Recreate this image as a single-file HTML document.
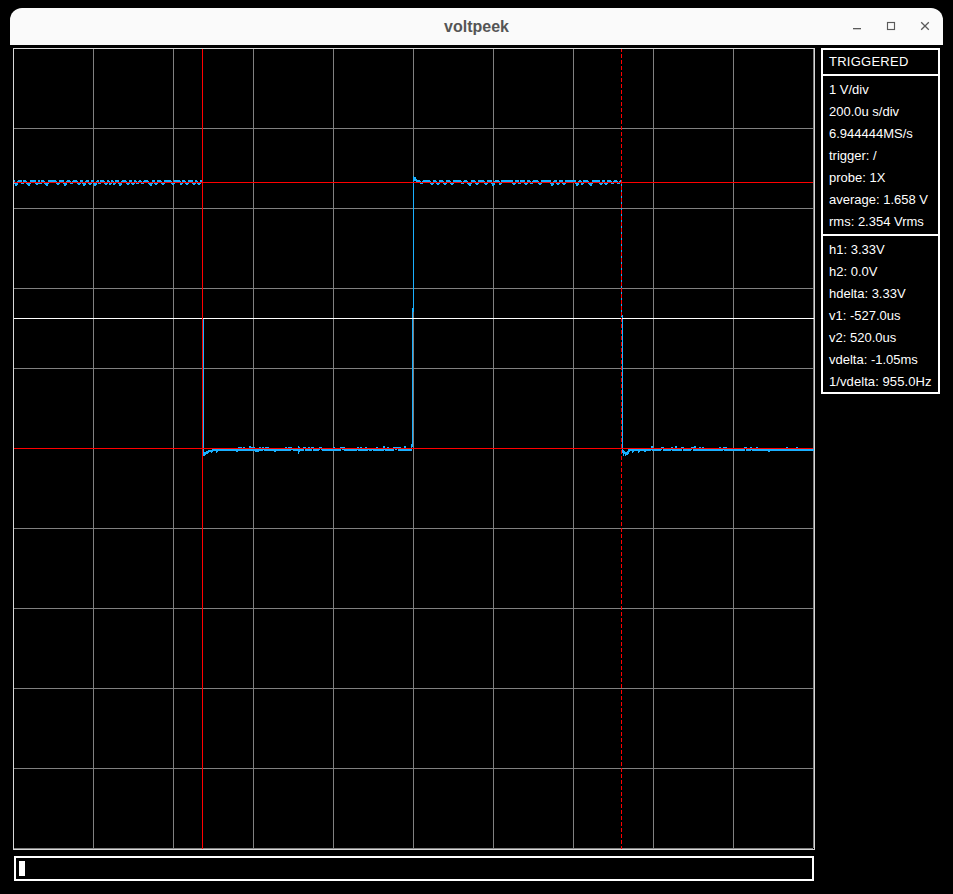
<!DOCTYPE html>
<html><head><meta charset="utf-8"><style>
html,body{margin:0;padding:0;background:#000;width:953px;height:894px;overflow:hidden;position:relative}
.title{position:absolute;left:10px;top:8px;width:933px;height:37px;background:#fafafa;border-radius:12px 12px 0 0}
.title .name{position:absolute;left:0;width:100%;top:9px;text-align:center;font-family:"Liberation Sans",sans-serif;font-weight:bold;font-size:16px;color:#555;line-height:20px}
.box{position:absolute;border:2px solid #fff;box-sizing:border-box}
.t{position:absolute;left:829px;font-family:"Liberation Sans",sans-serif;font-size:13px;line-height:15px;color:#fff;white-space:nowrap}
</style></head><body>
<div class="title"><div class="name">voltpeek</div>
<svg width="933" height="37" style="position:absolute;left:0;top:0">
<rect x="843" y="20" width="8" height="1.3" fill="#5a5a5a"/>
<rect x="877.5" y="14.5" width="7" height="7" fill="none" stroke="#5a5a5a" stroke-width="1.15"/>
<path d="M911.2 14.2 L918.8 21.8 M918.8 14.2 L911.2 21.8" stroke="#5a5a5a" stroke-width="1.3"/>
</svg></div>
<svg width="953" height="894" style="position:absolute;left:0;top:0" shape-rendering="crispEdges"><rect x="13" y="48" width="1" height="800" fill="#808080"/><rect x="13" y="48" width="800" height="1" fill="#808080"/><rect x="93" y="48" width="1" height="800" fill="#808080"/><rect x="13" y="128" width="800" height="1" fill="#808080"/><rect x="173" y="48" width="1" height="800" fill="#808080"/><rect x="13" y="208" width="800" height="1" fill="#808080"/><rect x="253" y="48" width="1" height="800" fill="#808080"/><rect x="13" y="288" width="800" height="1" fill="#808080"/><rect x="333" y="48" width="1" height="800" fill="#808080"/><rect x="13" y="368" width="800" height="1" fill="#808080"/><rect x="413" y="48" width="1" height="800" fill="#808080"/><rect x="13" y="448" width="800" height="1" fill="#808080"/><rect x="493" y="48" width="1" height="800" fill="#808080"/><rect x="13" y="528" width="800" height="1" fill="#808080"/><rect x="573" y="48" width="1" height="800" fill="#808080"/><rect x="13" y="608" width="800" height="1" fill="#808080"/><rect x="653" y="48" width="1" height="800" fill="#808080"/><rect x="13" y="688" width="800" height="1" fill="#808080"/><rect x="733" y="48" width="1" height="800" fill="#808080"/><rect x="13" y="768" width="800" height="1" fill="#808080"/><rect x="813" y="48" width="1" height="800" fill="#808080"/><rect x="13" y="848" width="800" height="1" fill="#808080"/><rect x="13" y="48" width="802" height="1" fill="#d8d8d8"/><rect x="13" y="48" width="1" height="802" fill="#d8d8d8"/><rect x="814" y="48" width="1" height="802" fill="#d8d8d8"/><rect x="13" y="849" width="802" height="1" fill="#d8d8d8"/><g fill="#1ab0ff"><rect x="203" y="448" width="1" height="1"/><rect x="233" y="448" width="2" height="1"/><rect x="238" y="448" width="4" height="1"/><rect x="243" y="448" width="2" height="1"/><rect x="249" y="448" width="6" height="1"/><rect x="259" y="448" width="2" height="1"/><rect x="262" y="448" width="7" height="1"/><rect x="270" y="448" width="2" height="1"/><rect x="278" y="448" width="2" height="1"/><rect x="285" y="448" width="2" height="1"/><rect x="288" y="448" width="8" height="1"/><rect x="298" y="448" width="2" height="1"/><rect x="303" y="448" width="3" height="1"/><rect x="308" y="448" width="2" height="1"/><rect x="311" y="448" width="3" height="1"/><rect x="318" y="448" width="5" height="1"/><rect x="333" y="448" width="4" height="1"/><rect x="340" y="448" width="5" height="1"/><rect x="347" y="448" width="4" height="1"/><rect x="354" y="448" width="5" height="1"/><rect x="360" y="448" width="2" height="1"/><rect x="365" y="448" width="5" height="1"/><rect x="371" y="448" width="3" height="1"/><rect x="376" y="448" width="2" height="1"/><rect x="381" y="448" width="5" height="1"/><rect x="387" y="448" width="2" height="1"/><rect x="393" y="448" width="8" height="1"/><rect x="404" y="448" width="2" height="1"/><rect x="409" y="448" width="3" height="1"/><rect x="622" y="448" width="1" height="1"/><rect x="642" y="448" width="2" height="1"/><rect x="645" y="448" width="4" height="1"/><rect x="650" y="448" width="3" height="1"/><rect x="660" y="448" width="4" height="1"/><rect x="670" y="448" width="3" height="1"/><rect x="675" y="448" width="2" height="1"/><rect x="681" y="448" width="3" height="1"/><rect x="688" y="448" width="8" height="1"/><rect x="699" y="448" width="2" height="1"/><rect x="702" y="448" width="2" height="1"/><rect x="707" y="448" width="2" height="1"/><rect x="711" y="448" width="2" height="1"/><rect x="719" y="448" width="2" height="1"/><rect x="722" y="448" width="5" height="1"/><rect x="734" y="448" width="2" height="1"/><rect x="737" y="448" width="6" height="1"/><rect x="744" y="448" width="5" height="1"/><rect x="750" y="448" width="3" height="1"/><rect x="756" y="448" width="2" height="1"/><rect x="765" y="448" width="4" height="1"/><rect x="779" y="448" width="2" height="1"/><rect x="786" y="448" width="2" height="1"/><rect x="796" y="448" width="2" height="1"/><rect x="203" y="322" width="1" height="1"/><rect x="412" y="322" width="1" height="1"/><rect x="622" y="322" width="1" height="1"/><rect x="203" y="328" width="1" height="1"/><rect x="412" y="328" width="1" height="1"/><rect x="622" y="328" width="1" height="1"/><rect x="203" y="449" width="1" height="1"/><rect x="212" y="449" width="92" height="1"/><rect x="305" y="449" width="7" height="1"/><rect x="313" y="449" width="7" height="1"/><rect x="321" y="449" width="20" height="1"/><rect x="342" y="449" width="52" height="1"/><rect x="395" y="449" width="2" height="1"/><rect x="398" y="449" width="14" height="1"/><rect x="622" y="449" width="1" height="1"/><rect x="628" y="449" width="34" height="1"/><rect x="663" y="449" width="19" height="1"/><rect x="683" y="449" width="9" height="1"/><rect x="693" y="449" width="52" height="1"/><rect x="746" y="449" width="68" height="1"/><rect x="203" y="450" width="1" height="1"/><rect x="208" y="450" width="55" height="1"/><rect x="264" y="450" width="27" height="1"/><rect x="293" y="450" width="11" height="1"/><rect x="305" y="450" width="7" height="1"/><rect x="313" y="450" width="6" height="1"/><rect x="322" y="450" width="19" height="1"/><rect x="344" y="450" width="13" height="1"/><rect x="358" y="450" width="10" height="1"/><rect x="369" y="450" width="3" height="1"/><rect x="373" y="450" width="11" height="1"/><rect x="385" y="450" width="9" height="1"/><rect x="398" y="450" width="14" height="1"/><rect x="622" y="450" width="2" height="1"/><rect x="628" y="450" width="23" height="1"/><rect x="652" y="450" width="9" height="1"/><rect x="663" y="450" width="8" height="1"/><rect x="672" y="450" width="10" height="1"/><rect x="683" y="450" width="8" height="1"/><rect x="693" y="450" width="30" height="1"/><rect x="724" y="450" width="21" height="1"/><rect x="746" y="450" width="5" height="1"/><rect x="752" y="450" width="62" height="1"/><rect x="203" y="433" width="1" height="1"/><rect x="412" y="433" width="1" height="1"/><rect x="622" y="433" width="1" height="1"/><rect x="203" y="447" width="1" height="1"/><rect x="238" y="447" width="4" height="1"/><rect x="243" y="447" width="2" height="1"/><rect x="249" y="447" width="6" height="1"/><rect x="259" y="447" width="2" height="1"/><rect x="262" y="447" width="2" height="1"/><rect x="265" y="447" width="4" height="1"/><rect x="285" y="447" width="2" height="1"/><rect x="288" y="447" width="4" height="1"/><rect x="298" y="447" width="2" height="1"/><rect x="303" y="447" width="3" height="1"/><rect x="308" y="447" width="2" height="1"/><rect x="311" y="447" width="3" height="1"/><rect x="319" y="447" width="3" height="1"/><rect x="333" y="447" width="2" height="1"/><rect x="340" y="447" width="5" height="1"/><rect x="357" y="447" width="2" height="1"/><rect x="360" y="447" width="2" height="1"/><rect x="365" y="447" width="2" height="1"/><rect x="376" y="447" width="2" height="1"/><rect x="383" y="447" width="2" height="1"/><rect x="387" y="447" width="2" height="1"/><rect x="393" y="447" width="8" height="1"/><rect x="404" y="447" width="2" height="1"/><rect x="411" y="447" width="1" height="1"/><rect x="622" y="447" width="1" height="1"/><rect x="651" y="447" width="2" height="1"/><rect x="661" y="447" width="3" height="1"/><rect x="671" y="447" width="2" height="1"/><rect x="675" y="447" width="2" height="1"/><rect x="681" y="447" width="3" height="1"/><rect x="691" y="447" width="5" height="1"/><rect x="699" y="447" width="2" height="1"/><rect x="702" y="447" width="2" height="1"/><rect x="719" y="447" width="2" height="1"/><rect x="723" y="447" width="4" height="1"/><rect x="744" y="447" width="3" height="1"/><rect x="750" y="447" width="2" height="1"/><rect x="756" y="447" width="2" height="1"/><rect x="786" y="447" width="2" height="1"/><rect x="796" y="447" width="2" height="1"/><rect x="203" y="443" width="1" height="1"/><rect x="412" y="443" width="1" height="1"/><rect x="622" y="443" width="1" height="1"/><rect x="202" y="208" width="1" height="1"/><rect x="413" y="208" width="1" height="1"/><rect x="621" y="208" width="1" height="1"/><rect x="202" y="224" width="1" height="1"/><rect x="413" y="224" width="1" height="1"/><rect x="621" y="224" width="1" height="1"/><rect x="203" y="341" width="1" height="1"/><rect x="412" y="341" width="1" height="1"/><rect x="622" y="341" width="1" height="1"/><rect x="203" y="335" width="1" height="1"/><rect x="412" y="335" width="1" height="1"/><rect x="622" y="335" width="1" height="1"/><rect x="14" y="180" width="1" height="1"/><rect x="18" y="180" width="4" height="1"/><rect x="23" y="180" width="3" height="1"/><rect x="30" y="180" width="6" height="1"/><rect x="38" y="180" width="2" height="1"/><rect x="41" y="180" width="3" height="1"/><rect x="48" y="180" width="8" height="1"/><rect x="59" y="180" width="5" height="1"/><rect x="67" y="180" width="3" height="1"/><rect x="73" y="180" width="4" height="1"/><rect x="80" y="180" width="3" height="1"/><rect x="86" y="180" width="3" height="1"/><rect x="91" y="180" width="3" height="1"/><rect x="97" y="180" width="2" height="1"/><rect x="100" y="180" width="4" height="1"/><rect x="107" y="180" width="2" height="1"/><rect x="111" y="180" width="2" height="1"/><rect x="115" y="180" width="4" height="1"/><rect x="122" y="180" width="4" height="1"/><rect x="129" y="180" width="3" height="1"/><rect x="134" y="180" width="2" height="1"/><rect x="139" y="180" width="2" height="1"/><rect x="144" y="180" width="4" height="1"/><rect x="152" y="180" width="3" height="1"/><rect x="157" y="180" width="4" height="1"/><rect x="164" y="180" width="7" height="1"/><rect x="174" y="180" width="6" height="1"/><rect x="182" y="180" width="3" height="1"/><rect x="188" y="180" width="5" height="1"/><rect x="195" y="180" width="2" height="1"/><rect x="200" y="180" width="2" height="1"/><rect x="413" y="180" width="7" height="1"/><rect x="423" y="180" width="7" height="1"/><rect x="433" y="180" width="3" height="1"/><rect x="439" y="180" width="4" height="1"/><rect x="446" y="180" width="4" height="1"/><rect x="453" y="180" width="8" height="1"/><rect x="464" y="180" width="3" height="1"/><rect x="471" y="180" width="4" height="1"/><rect x="478" y="180" width="6" height="1"/><rect x="487" y="180" width="5" height="1"/><rect x="495" y="180" width="4" height="1"/><rect x="501" y="180" width="12" height="1"/><rect x="515" y="180" width="4" height="1"/><rect x="520" y="180" width="5" height="1"/><rect x="527" y="180" width="3" height="1"/><rect x="533" y="180" width="5" height="1"/><rect x="541" y="180" width="10" height="1"/><rect x="554" y="180" width="3" height="1"/><rect x="559" y="180" width="4" height="1"/><rect x="565" y="180" width="11" height="1"/><rect x="579" y="180" width="2" height="1"/><rect x="583" y="180" width="5" height="1"/><rect x="592" y="180" width="8" height="1"/><rect x="602" y="180" width="3" height="1"/><rect x="607" y="180" width="4" height="1"/><rect x="614" y="180" width="3" height="1"/><rect x="620" y="180" width="1" height="1"/><rect x="203" y="453" width="5" height="1"/><rect x="298" y="453" width="1" height="1"/><rect x="623" y="453" width="6" height="1"/><rect x="14" y="182" width="2" height="1"/><rect x="17" y="182" width="2" height="1"/><rect x="21" y="182" width="3" height="1"/><rect x="25" y="182" width="3" height="1"/><rect x="29" y="182" width="2" height="1"/><rect x="35" y="182" width="7" height="1"/><rect x="43" y="182" width="3" height="1"/><rect x="47" y="182" width="2" height="1"/><rect x="55" y="182" width="5" height="1"/><rect x="63" y="182" width="2" height="1"/><rect x="66" y="182" width="2" height="1"/><rect x="69" y="182" width="5" height="1"/><rect x="76" y="182" width="5" height="1"/><rect x="82" y="182" width="2" height="1"/><rect x="85" y="182" width="2" height="1"/><rect x="88" y="182" width="4" height="1"/><rect x="93" y="182" width="2" height="1"/><rect x="96" y="182" width="5" height="1"/><rect x="103" y="182" width="13" height="1"/><rect x="118" y="182" width="2" height="1"/><rect x="121" y="182" width="2" height="1"/><rect x="125" y="182" width="5" height="1"/><rect x="131" y="182" width="14" height="1"/><rect x="147" y="182" width="3" height="1"/><rect x="151" y="182" width="2" height="1"/><rect x="154" y="182" width="4" height="1"/><rect x="160" y="182" width="5" height="1"/><rect x="170" y="182" width="5" height="1"/><rect x="179" y="182" width="4" height="1"/><rect x="184" y="182" width="5" height="1"/><rect x="192" y="182" width="9" height="1"/><rect x="202" y="182" width="1" height="1"/><rect x="413" y="182" width="1" height="1"/><rect x="419" y="182" width="5" height="1"/><rect x="429" y="182" width="5" height="1"/><rect x="435" y="182" width="5" height="1"/><rect x="442" y="182" width="5" height="1"/><rect x="449" y="182" width="5" height="1"/><rect x="460" y="182" width="5" height="1"/><rect x="466" y="182" width="3" height="1"/><rect x="470" y="182" width="2" height="1"/><rect x="474" y="182" width="5" height="1"/><rect x="483" y="182" width="5" height="1"/><rect x="491" y="182" width="2" height="1"/><rect x="494" y="182" width="2" height="1"/><rect x="498" y="182" width="4" height="1"/><rect x="512" y="182" width="4" height="1"/><rect x="518" y="182" width="3" height="1"/><rect x="524" y="182" width="4" height="1"/><rect x="529" y="182" width="5" height="1"/><rect x="537" y="182" width="5" height="1"/><rect x="550" y="182" width="2" height="1"/><rect x="553" y="182" width="2" height="1"/><rect x="556" y="182" width="4" height="1"/><rect x="562" y="182" width="4" height="1"/><rect x="575" y="182" width="2" height="1"/><rect x="578" y="182" width="6" height="1"/><rect x="587" y="182" width="3" height="1"/><rect x="591" y="182" width="2" height="1"/><rect x="599" y="182" width="4" height="1"/><rect x="604" y="182" width="4" height="1"/><rect x="610" y="182" width="5" height="1"/><rect x="616" y="182" width="6" height="1"/><rect x="203" y="451" width="1" height="1"/><rect x="206" y="451" width="7" height="1"/><rect x="216" y="451" width="2" height="1"/><rect x="236" y="451" width="2" height="1"/><rect x="255" y="451" width="4" height="1"/><rect x="274" y="451" width="2" height="1"/><rect x="298" y="451" width="2" height="1"/><rect x="622" y="451" width="3" height="1"/><rect x="627" y="451" width="3" height="1"/><rect x="632" y="451" width="2" height="1"/><rect x="638" y="451" width="2" height="1"/><rect x="644" y="451" width="2" height="1"/><rect x="768" y="451" width="2" height="1"/><rect x="202" y="237" width="1" height="1"/><rect x="413" y="237" width="1" height="1"/><rect x="621" y="237" width="1" height="1"/><rect x="202" y="277" width="1" height="1"/><rect x="413" y="277" width="1" height="1"/><rect x="621" y="277" width="1" height="1"/><rect x="203" y="387" width="1" height="1"/><rect x="412" y="387" width="1" height="1"/><rect x="622" y="387" width="1" height="1"/><rect x="14" y="181" width="1" height="1"/><rect x="17" y="181" width="5" height="1"/><rect x="23" y="181" width="4" height="1"/><rect x="30" y="181" width="6" height="1"/><rect x="38" y="181" width="2" height="1"/><rect x="41" y="181" width="4" height="1"/><rect x="48" y="181" width="9" height="1"/><rect x="59" y="181" width="5" height="1"/><rect x="66" y="181" width="5" height="1"/><rect x="72" y="181" width="6" height="1"/><rect x="80" y="181" width="3" height="1"/><rect x="85" y="181" width="4" height="1"/><rect x="91" y="181" width="3" height="1"/><rect x="96" y="181" width="3" height="1"/><rect x="100" y="181" width="5" height="1"/><rect x="107" y="181" width="3" height="1"/><rect x="111" y="181" width="3" height="1"/><rect x="115" y="181" width="4" height="1"/><rect x="121" y="181" width="6" height="1"/><rect x="129" y="181" width="3" height="1"/><rect x="134" y="181" width="3" height="1"/><rect x="138" y="181" width="4" height="1"/><rect x="143" y="181" width="6" height="1"/><rect x="152" y="181" width="3" height="1"/><rect x="157" y="181" width="5" height="1"/><rect x="164" y="181" width="8" height="1"/><rect x="174" y="181" width="7" height="1"/><rect x="182" y="181" width="4" height="1"/><rect x="188" y="181" width="5" height="1"/><rect x="195" y="181" width="3" height="1"/><rect x="200" y="181" width="3" height="1"/><rect x="413" y="181" width="1" height="1"/><rect x="416" y="181" width="5" height="1"/><rect x="422" y="181" width="9" height="1"/><rect x="433" y="181" width="4" height="1"/><rect x="439" y="181" width="5" height="1"/><rect x="446" y="181" width="5" height="1"/><rect x="453" y="181" width="9" height="1"/><rect x="463" y="181" width="5" height="1"/><rect x="471" y="181" width="5" height="1"/><rect x="478" y="181" width="7" height="1"/><rect x="487" y="181" width="5" height="1"/><rect x="494" y="181" width="6" height="1"/><rect x="501" y="181" width="12" height="1"/><rect x="515" y="181" width="4" height="1"/><rect x="520" y="181" width="5" height="1"/><rect x="527" y="181" width="4" height="1"/><rect x="532" y="181" width="7" height="1"/><rect x="541" y="181" width="10" height="1"/><rect x="553" y="181" width="4" height="1"/><rect x="559" y="181" width="4" height="1"/><rect x="565" y="181" width="11" height="1"/><rect x="578" y="181" width="4" height="1"/><rect x="583" y="181" width="6" height="1"/><rect x="592" y="181" width="8" height="1"/><rect x="602" y="181" width="3" height="1"/><rect x="607" y="181" width="5" height="1"/><rect x="613" y="181" width="5" height="1"/><rect x="619" y="181" width="3" height="1"/><rect x="14" y="183" width="4" height="1"/><rect x="21" y="183" width="3" height="1"/><rect x="26" y="183" width="5" height="1"/><rect x="35" y="183" width="7" height="1"/><rect x="44" y="183" width="5" height="1"/><rect x="56" y="183" width="4" height="1"/><rect x="63" y="183" width="4" height="1"/><rect x="70" y="183" width="3" height="1"/><rect x="77" y="183" width="4" height="1"/><rect x="82" y="183" width="4" height="1"/><rect x="88" y="183" width="4" height="1"/><rect x="93" y="183" width="4" height="1"/><rect x="98" y="183" width="3" height="1"/><rect x="104" y="183" width="4" height="1"/><rect x="109" y="183" width="3" height="1"/><rect x="113" y="183" width="3" height="1"/><rect x="118" y="183" width="4" height="1"/><rect x="126" y="183" width="4" height="1"/><rect x="131" y="183" width="4" height="1"/><rect x="136" y="183" width="3" height="1"/><rect x="141" y="183" width="3" height="1"/><rect x="148" y="183" width="5" height="1"/><rect x="154" y="183" width="4" height="1"/><rect x="161" y="183" width="4" height="1"/><rect x="171" y="183" width="4" height="1"/><rect x="180" y="183" width="3" height="1"/><rect x="185" y="183" width="4" height="1"/><rect x="192" y="183" width="4" height="1"/><rect x="197" y="183" width="4" height="1"/><rect x="202" y="183" width="1" height="1"/><rect x="413" y="183" width="1" height="1"/><rect x="420" y="183" width="3" height="1"/><rect x="430" y="183" width="4" height="1"/><rect x="436" y="183" width="4" height="1"/><rect x="443" y="183" width="4" height="1"/><rect x="450" y="183" width="4" height="1"/><rect x="461" y="183" width="3" height="1"/><rect x="467" y="183" width="5" height="1"/><rect x="475" y="183" width="4" height="1"/><rect x="484" y="183" width="4" height="1"/><rect x="491" y="183" width="4" height="1"/><rect x="499" y="183" width="3" height="1"/><rect x="512" y="183" width="4" height="1"/><rect x="518" y="183" width="3" height="1"/><rect x="524" y="183" width="4" height="1"/><rect x="530" y="183" width="3" height="1"/><rect x="538" y="183" width="4" height="1"/><rect x="550" y="183" width="4" height="1"/><rect x="556" y="183" width="4" height="1"/><rect x="562" y="183" width="4" height="1"/><rect x="575" y="183" width="4" height="1"/><rect x="581" y="183" width="3" height="1"/><rect x="588" y="183" width="5" height="1"/><rect x="599" y="183" width="4" height="1"/><rect x="604" y="183" width="4" height="1"/><rect x="611" y="183" width="3" height="1"/><rect x="617" y="183" width="3" height="1"/><rect x="621" y="183" width="1" height="1"/><rect x="15" y="185" width="2" height="1"/><rect x="28" y="185" width="2" height="1"/><rect x="46" y="185" width="2" height="1"/><rect x="64" y="185" width="2" height="1"/><rect x="83" y="185" width="2" height="1"/><rect x="94" y="185" width="2" height="1"/><rect x="119" y="185" width="2" height="1"/><rect x="150" y="185" width="2" height="1"/><rect x="202" y="185" width="1" height="1"/><rect x="413" y="185" width="1" height="1"/><rect x="469" y="185" width="2" height="1"/><rect x="492" y="185" width="2" height="1"/><rect x="551" y="185" width="2" height="1"/><rect x="576" y="185" width="2" height="1"/><rect x="590" y="185" width="2" height="1"/><rect x="621" y="185" width="1" height="1"/><rect x="202" y="290" width="1" height="1"/><rect x="413" y="290" width="1" height="1"/><rect x="621" y="290" width="1" height="1"/><rect x="15" y="184" width="3" height="1"/><rect x="27" y="184" width="3" height="1"/><rect x="36" y="184" width="2" height="1"/><rect x="45" y="184" width="3" height="1"/><rect x="57" y="184" width="2" height="1"/><rect x="64" y="184" width="3" height="1"/><rect x="78" y="184" width="2" height="1"/><rect x="83" y="184" width="3" height="1"/><rect x="89" y="184" width="2" height="1"/><rect x="94" y="184" width="3" height="1"/><rect x="105" y="184" width="2" height="1"/><rect x="109" y="184" width="2" height="1"/><rect x="113" y="184" width="2" height="1"/><rect x="119" y="184" width="3" height="1"/><rect x="127" y="184" width="2" height="1"/><rect x="132" y="184" width="2" height="1"/><rect x="149" y="184" width="3" height="1"/><rect x="155" y="184" width="2" height="1"/><rect x="162" y="184" width="2" height="1"/><rect x="172" y="184" width="2" height="1"/><rect x="180" y="184" width="2" height="1"/><rect x="186" y="184" width="2" height="1"/><rect x="193" y="184" width="2" height="1"/><rect x="198" y="184" width="2" height="1"/><rect x="202" y="184" width="1" height="1"/><rect x="413" y="184" width="1" height="1"/><rect x="431" y="184" width="2" height="1"/><rect x="437" y="184" width="2" height="1"/><rect x="444" y="184" width="2" height="1"/><rect x="451" y="184" width="2" height="1"/><rect x="468" y="184" width="3" height="1"/><rect x="476" y="184" width="2" height="1"/><rect x="485" y="184" width="2" height="1"/><rect x="492" y="184" width="3" height="1"/><rect x="499" y="184" width="2" height="1"/><rect x="513" y="184" width="2" height="1"/><rect x="525" y="184" width="2" height="1"/><rect x="539" y="184" width="2" height="1"/><rect x="551" y="184" width="3" height="1"/><rect x="557" y="184" width="2" height="1"/><rect x="563" y="184" width="2" height="1"/><rect x="576" y="184" width="3" height="1"/><rect x="581" y="184" width="2" height="1"/><rect x="589" y="184" width="3" height="1"/><rect x="600" y="184" width="2" height="1"/><rect x="605" y="184" width="2" height="1"/><rect x="621" y="184" width="1" height="1"/><rect x="203" y="400" width="1" height="1"/><rect x="412" y="400" width="1" height="1"/><rect x="622" y="400" width="1" height="1"/><rect x="203" y="410" width="1" height="1"/><rect x="412" y="410" width="1" height="1"/><rect x="622" y="410" width="1" height="1"/><rect x="203" y="416" width="1" height="1"/><rect x="412" y="416" width="1" height="1"/><rect x="622" y="416" width="1" height="1"/><rect x="202" y="191" width="1" height="1"/><rect x="413" y="191" width="1" height="1"/><rect x="621" y="191" width="1" height="1"/><rect x="202" y="296" width="1" height="1"/><rect x="413" y="296" width="1" height="1"/><rect x="621" y="296" width="1" height="1"/><rect x="202" y="312" width="1" height="1"/><rect x="412" y="312" width="1" height="1"/><rect x="621" y="312" width="1" height="1"/><rect x="203" y="423" width="1" height="1"/><rect x="412" y="423" width="1" height="1"/><rect x="622" y="423" width="1" height="1"/><rect x="203" y="429" width="1" height="1"/><rect x="412" y="429" width="1" height="1"/><rect x="622" y="429" width="1" height="1"/><rect x="202" y="204" width="1" height="1"/><rect x="413" y="204" width="1" height="1"/><rect x="621" y="204" width="1" height="1"/><rect x="202" y="244" width="1" height="1"/><rect x="413" y="244" width="1" height="1"/><rect x="621" y="244" width="1" height="1"/><rect x="203" y="354" width="1" height="1"/><rect x="412" y="354" width="1" height="1"/><rect x="622" y="354" width="1" height="1"/><rect x="202" y="309" width="1" height="1"/><rect x="412" y="309" width="2" height="1"/><rect x="621" y="309" width="1" height="1"/><rect x="202" y="257" width="1" height="1"/><rect x="413" y="257" width="1" height="1"/><rect x="621" y="257" width="1" height="1"/><rect x="203" y="452" width="6" height="1"/><rect x="211" y="452" width="1" height="1"/><rect x="216" y="452" width="1" height="1"/><rect x="298" y="452" width="1" height="1"/><rect x="622" y="452" width="7" height="1"/><rect x="632" y="452" width="1" height="1"/><rect x="638" y="452" width="1" height="1"/><rect x="203" y="367" width="1" height="1"/><rect x="412" y="367" width="1" height="1"/><rect x="622" y="367" width="1" height="1"/><rect x="203" y="377" width="1" height="1"/><rect x="412" y="377" width="1" height="1"/><rect x="622" y="377" width="1" height="1"/><rect x="203" y="383" width="1" height="1"/><rect x="412" y="383" width="1" height="1"/><rect x="622" y="383" width="1" height="1"/><rect x="202" y="263" width="1" height="1"/><rect x="413" y="263" width="1" height="1"/><rect x="621" y="263" width="1" height="1"/><rect x="203" y="390" width="1" height="1"/><rect x="412" y="390" width="1" height="1"/><rect x="622" y="390" width="1" height="1"/><rect x="203" y="396" width="1" height="1"/><rect x="412" y="396" width="1" height="1"/><rect x="622" y="396" width="1" height="1"/><rect x="202" y="211" width="1" height="1"/><rect x="413" y="211" width="1" height="1"/><rect x="621" y="211" width="1" height="1"/><rect x="203" y="321" width="1" height="1"/><rect x="412" y="321" width="1" height="1"/><rect x="622" y="321" width="1" height="1"/><rect x="202" y="276" width="1" height="1"/><rect x="413" y="276" width="1" height="1"/><rect x="621" y="276" width="1" height="1"/><rect x="202" y="292" width="1" height="1"/><rect x="413" y="292" width="1" height="1"/><rect x="621" y="292" width="1" height="1"/><rect x="203" y="334" width="1" height="1"/><rect x="412" y="334" width="1" height="1"/><rect x="622" y="334" width="1" height="1"/><rect x="203" y="350" width="1" height="1"/><rect x="412" y="350" width="1" height="1"/><rect x="622" y="350" width="1" height="1"/><rect x="202" y="305" width="1" height="1"/><rect x="413" y="305" width="1" height="1"/><rect x="621" y="305" width="1" height="1"/><rect x="202" y="230" width="1" height="1"/><rect x="413" y="230" width="1" height="1"/><rect x="621" y="230" width="1" height="1"/><rect x="203" y="357" width="1" height="1"/><rect x="412" y="357" width="1" height="1"/><rect x="622" y="357" width="1" height="1"/><rect x="203" y="363" width="1" height="1"/><rect x="412" y="363" width="1" height="1"/><rect x="622" y="363" width="1" height="1"/><rect x="202" y="243" width="1" height="1"/><rect x="413" y="243" width="1" height="1"/><rect x="621" y="243" width="1" height="1"/><rect x="202" y="259" width="1" height="1"/><rect x="413" y="259" width="1" height="1"/><rect x="621" y="259" width="1" height="1"/><rect x="203" y="370" width="1" height="1"/><rect x="412" y="370" width="1" height="1"/><rect x="622" y="370" width="1" height="1"/><rect x="202" y="272" width="1" height="1"/><rect x="413" y="272" width="1" height="1"/><rect x="621" y="272" width="1" height="1"/><rect x="203" y="422" width="1" height="1"/><rect x="412" y="422" width="1" height="1"/><rect x="622" y="422" width="1" height="1"/><rect x="203" y="438" width="1" height="1"/><rect x="412" y="438" width="1" height="1"/><rect x="622" y="438" width="1" height="1"/><rect x="202" y="197" width="1" height="1"/><rect x="413" y="197" width="1" height="1"/><rect x="621" y="197" width="1" height="1"/><rect x="203" y="446" width="1" height="1"/><rect x="249" y="446" width="2" height="1"/><rect x="298" y="446" width="1" height="1"/><rect x="383" y="446" width="2" height="1"/><rect x="404" y="446" width="2" height="1"/><rect x="411" y="446" width="2" height="1"/><rect x="622" y="446" width="1" height="1"/><rect x="651" y="446" width="2" height="1"/><rect x="675" y="446" width="2" height="1"/><rect x="694" y="446" width="2" height="1"/><rect x="203" y="324" width="1" height="1"/><rect x="412" y="324" width="1" height="1"/><rect x="622" y="324" width="1" height="1"/><rect x="203" y="330" width="1" height="1"/><rect x="412" y="330" width="1" height="1"/><rect x="622" y="330" width="1" height="1"/><rect x="203" y="435" width="1" height="1"/><rect x="412" y="435" width="1" height="1"/><rect x="622" y="435" width="1" height="1"/><rect x="203" y="445" width="1" height="1"/><rect x="411" y="445" width="2" height="1"/><rect x="622" y="445" width="1" height="1"/><rect x="202" y="210" width="1" height="1"/><rect x="413" y="210" width="1" height="1"/><rect x="621" y="210" width="1" height="1"/><rect x="202" y="226" width="1" height="1"/><rect x="413" y="226" width="1" height="1"/><rect x="621" y="226" width="1" height="1"/><rect x="203" y="337" width="1" height="1"/><rect x="412" y="337" width="1" height="1"/><rect x="622" y="337" width="1" height="1"/><rect x="202" y="239" width="1" height="1"/><rect x="413" y="239" width="1" height="1"/><rect x="621" y="239" width="1" height="1"/><rect x="202" y="279" width="1" height="1"/><rect x="413" y="279" width="1" height="1"/><rect x="621" y="279" width="1" height="1"/><rect x="203" y="389" width="1" height="1"/><rect x="412" y="389" width="1" height="1"/><rect x="622" y="389" width="1" height="1"/><rect x="202" y="285" width="1" height="1"/><rect x="413" y="285" width="1" height="1"/><rect x="621" y="285" width="1" height="1"/><rect x="203" y="402" width="1" height="1"/><rect x="412" y="402" width="1" height="1"/><rect x="622" y="402" width="1" height="1"/><rect x="203" y="412" width="1" height="1"/><rect x="412" y="412" width="1" height="1"/><rect x="622" y="412" width="1" height="1"/><rect x="203" y="418" width="1" height="1"/><rect x="412" y="418" width="1" height="1"/><rect x="622" y="418" width="1" height="1"/><rect x="202" y="193" width="1" height="1"/><rect x="413" y="193" width="1" height="1"/><rect x="621" y="193" width="1" height="1"/><rect x="202" y="298" width="1" height="1"/><rect x="413" y="298" width="1" height="1"/><rect x="621" y="298" width="1" height="1"/><rect x="202" y="314" width="1" height="1"/><rect x="412" y="314" width="1" height="1"/><rect x="621" y="314" width="1" height="1"/><rect x="203" y="425" width="1" height="1"/><rect x="412" y="425" width="1" height="1"/><rect x="622" y="425" width="1" height="1"/><rect x="203" y="431" width="1" height="1"/><rect x="412" y="431" width="1" height="1"/><rect x="622" y="431" width="1" height="1"/><rect x="202" y="206" width="1" height="1"/><rect x="413" y="206" width="1" height="1"/><rect x="621" y="206" width="1" height="1"/><rect x="202" y="246" width="1" height="1"/><rect x="413" y="246" width="1" height="1"/><rect x="621" y="246" width="1" height="1"/><rect x="203" y="356" width="1" height="1"/><rect x="412" y="356" width="1" height="1"/><rect x="622" y="356" width="1" height="1"/><rect x="202" y="252" width="1" height="1"/><rect x="413" y="252" width="1" height="1"/><rect x="621" y="252" width="1" height="1"/><rect x="203" y="369" width="1" height="1"/><rect x="412" y="369" width="1" height="1"/><rect x="622" y="369" width="1" height="1"/><rect x="203" y="379" width="1" height="1"/><rect x="412" y="379" width="1" height="1"/><rect x="622" y="379" width="1" height="1"/><rect x="203" y="385" width="1" height="1"/><rect x="412" y="385" width="1" height="1"/><rect x="622" y="385" width="1" height="1"/><rect x="202" y="265" width="1" height="1"/><rect x="413" y="265" width="1" height="1"/><rect x="621" y="265" width="1" height="1"/><rect x="203" y="454" width="3" height="1"/><rect x="623" y="454" width="1" height="1"/><rect x="625" y="454" width="3" height="1"/><rect x="202" y="281" width="1" height="1"/><rect x="413" y="281" width="1" height="1"/><rect x="621" y="281" width="1" height="1"/><rect x="203" y="392" width="1" height="1"/><rect x="412" y="392" width="1" height="1"/><rect x="622" y="392" width="1" height="1"/><rect x="203" y="398" width="1" height="1"/><rect x="412" y="398" width="1" height="1"/><rect x="622" y="398" width="1" height="1"/><rect x="202" y="213" width="1" height="1"/><rect x="413" y="213" width="1" height="1"/><rect x="621" y="213" width="1" height="1"/><rect x="203" y="323" width="1" height="1"/><rect x="412" y="323" width="1" height="1"/><rect x="622" y="323" width="1" height="1"/><rect x="202" y="294" width="1" height="1"/><rect x="413" y="294" width="1" height="1"/><rect x="621" y="294" width="1" height="1"/><rect x="203" y="444" width="1" height="1"/><rect x="411" y="444" width="2" height="1"/><rect x="622" y="444" width="1" height="1"/><rect x="203" y="336" width="1" height="1"/><rect x="412" y="336" width="1" height="1"/><rect x="622" y="336" width="1" height="1"/><rect x="203" y="346" width="1" height="1"/><rect x="412" y="346" width="1" height="1"/><rect x="622" y="346" width="1" height="1"/><rect x="203" y="352" width="1" height="1"/><rect x="412" y="352" width="1" height="1"/><rect x="622" y="352" width="1" height="1"/><rect x="202" y="232" width="1" height="1"/><rect x="413" y="232" width="1" height="1"/><rect x="621" y="232" width="1" height="1"/><rect x="202" y="248" width="1" height="1"/><rect x="413" y="248" width="1" height="1"/><rect x="621" y="248" width="1" height="1"/><rect x="203" y="359" width="1" height="1"/><rect x="412" y="359" width="1" height="1"/><rect x="622" y="359" width="1" height="1"/><rect x="203" y="365" width="1" height="1"/><rect x="412" y="365" width="1" height="1"/><rect x="622" y="365" width="1" height="1"/><rect x="202" y="245" width="1" height="1"/><rect x="413" y="245" width="1" height="1"/><rect x="621" y="245" width="1" height="1"/><rect x="202" y="261" width="1" height="1"/><rect x="413" y="261" width="1" height="1"/><rect x="621" y="261" width="1" height="1"/><rect x="202" y="301" width="1" height="1"/><rect x="413" y="301" width="1" height="1"/><rect x="621" y="301" width="1" height="1"/><rect x="203" y="411" width="1" height="1"/><rect x="412" y="411" width="1" height="1"/><rect x="622" y="411" width="1" height="1"/><rect x="202" y="313" width="1" height="1"/><rect x="412" y="313" width="1" height="1"/><rect x="621" y="313" width="1" height="1"/><rect x="203" y="319" width="1" height="1"/><rect x="412" y="319" width="1" height="1"/><rect x="622" y="319" width="1" height="1"/><rect x="203" y="424" width="1" height="1"/><rect x="412" y="424" width="1" height="1"/><rect x="622" y="424" width="1" height="1"/><rect x="203" y="440" width="1" height="1"/><rect x="412" y="440" width="1" height="1"/><rect x="622" y="440" width="1" height="1"/><rect x="202" y="199" width="1" height="1"/><rect x="413" y="199" width="1" height="1"/><rect x="621" y="199" width="1" height="1"/><rect x="203" y="326" width="1" height="1"/><rect x="412" y="326" width="1" height="1"/><rect x="622" y="326" width="1" height="1"/><rect x="203" y="332" width="1" height="1"/><rect x="412" y="332" width="1" height="1"/><rect x="622" y="332" width="1" height="1"/><rect x="202" y="212" width="1" height="1"/><rect x="413" y="212" width="1" height="1"/><rect x="621" y="212" width="1" height="1"/><rect x="202" y="228" width="1" height="1"/><rect x="413" y="228" width="1" height="1"/><rect x="621" y="228" width="1" height="1"/><rect x="203" y="378" width="1" height="1"/><rect x="412" y="378" width="1" height="1"/><rect x="622" y="378" width="1" height="1"/><rect x="203" y="391" width="1" height="1"/><rect x="412" y="391" width="1" height="1"/><rect x="622" y="391" width="1" height="1"/><rect x="203" y="407" width="1" height="1"/><rect x="412" y="407" width="1" height="1"/><rect x="622" y="407" width="1" height="1"/><rect x="202" y="287" width="1" height="1"/><rect x="413" y="287" width="1" height="1"/><rect x="621" y="287" width="1" height="1"/><rect x="203" y="414" width="1" height="1"/><rect x="412" y="414" width="1" height="1"/><rect x="622" y="414" width="1" height="1"/><rect x="203" y="420" width="1" height="1"/><rect x="412" y="420" width="1" height="1"/><rect x="622" y="420" width="1" height="1"/><rect x="202" y="195" width="1" height="1"/><rect x="413" y="195" width="1" height="1"/><rect x="621" y="195" width="1" height="1"/><rect x="202" y="300" width="1" height="1"/><rect x="413" y="300" width="1" height="1"/><rect x="621" y="300" width="1" height="1"/><rect x="202" y="316" width="1" height="1"/><rect x="412" y="316" width="1" height="1"/><rect x="621" y="316" width="2" height="1"/><rect x="203" y="427" width="1" height="1"/><rect x="412" y="427" width="1" height="1"/><rect x="622" y="427" width="1" height="1"/><rect x="203" y="358" width="1" height="1"/><rect x="412" y="358" width="1" height="1"/><rect x="622" y="358" width="1" height="1"/><rect x="203" y="374" width="1" height="1"/><rect x="412" y="374" width="1" height="1"/><rect x="622" y="374" width="1" height="1"/><rect x="202" y="254" width="1" height="1"/><rect x="413" y="254" width="1" height="1"/><rect x="621" y="254" width="1" height="1"/><rect x="203" y="371" width="1" height="1"/><rect x="412" y="371" width="1" height="1"/><rect x="622" y="371" width="1" height="1"/><rect x="203" y="381" width="1" height="1"/><rect x="412" y="381" width="1" height="1"/><rect x="622" y="381" width="1" height="1"/><rect x="202" y="267" width="1" height="1"/><rect x="413" y="267" width="1" height="1"/><rect x="621" y="267" width="1" height="1"/><rect x="202" y="283" width="1" height="1"/><rect x="413" y="283" width="1" height="1"/><rect x="621" y="283" width="1" height="1"/><rect x="203" y="394" width="1" height="1"/><rect x="412" y="394" width="1" height="1"/><rect x="622" y="394" width="1" height="1"/><rect x="202" y="215" width="1" height="1"/><rect x="413" y="215" width="1" height="1"/><rect x="621" y="215" width="1" height="1"/><rect x="203" y="325" width="1" height="1"/><rect x="412" y="325" width="1" height="1"/><rect x="622" y="325" width="1" height="1"/><rect x="202" y="221" width="1" height="1"/><rect x="413" y="221" width="1" height="1"/><rect x="621" y="221" width="1" height="1"/><rect x="203" y="338" width="1" height="1"/><rect x="412" y="338" width="1" height="1"/><rect x="622" y="338" width="1" height="1"/><rect x="203" y="348" width="1" height="1"/><rect x="412" y="348" width="1" height="1"/><rect x="622" y="348" width="1" height="1"/><rect x="202" y="234" width="1" height="1"/><rect x="413" y="234" width="1" height="1"/><rect x="621" y="234" width="1" height="1"/><rect x="202" y="250" width="1" height="1"/><rect x="413" y="250" width="1" height="1"/><rect x="621" y="250" width="1" height="1"/><rect x="203" y="361" width="1" height="1"/><rect x="412" y="361" width="1" height="1"/><rect x="622" y="361" width="1" height="1"/><rect x="202" y="303" width="1" height="1"/><rect x="413" y="303" width="1" height="1"/><rect x="621" y="303" width="1" height="1"/><rect x="203" y="413" width="1" height="1"/><rect x="412" y="413" width="1" height="1"/><rect x="622" y="413" width="1" height="1"/><rect x="202" y="188" width="1" height="1"/><rect x="413" y="188" width="1" height="1"/><rect x="621" y="188" width="1" height="1"/><rect x="202" y="315" width="1" height="1"/><rect x="412" y="315" width="1" height="1"/><rect x="621" y="315" width="2" height="1"/><rect x="203" y="426" width="1" height="1"/><rect x="412" y="426" width="1" height="1"/><rect x="622" y="426" width="1" height="1"/><rect x="203" y="436" width="1" height="1"/><rect x="412" y="436" width="1" height="1"/><rect x="622" y="436" width="1" height="1"/><rect x="203" y="442" width="1" height="1"/><rect x="412" y="442" width="1" height="1"/><rect x="622" y="442" width="1" height="1"/><rect x="202" y="201" width="1" height="1"/><rect x="413" y="201" width="1" height="1"/><rect x="621" y="201" width="1" height="1"/><rect x="202" y="217" width="1" height="1"/><rect x="413" y="217" width="1" height="1"/><rect x="621" y="217" width="1" height="1"/><rect x="203" y="455" width="2" height="1"/><rect x="623" y="455" width="1" height="1"/><rect x="625" y="455" width="1" height="1"/><rect x="202" y="270" width="1" height="1"/><rect x="413" y="270" width="1" height="1"/><rect x="621" y="270" width="1" height="1"/><rect x="203" y="380" width="1" height="1"/><rect x="412" y="380" width="1" height="1"/><rect x="622" y="380" width="1" height="1"/><rect x="203" y="393" width="1" height="1"/><rect x="412" y="393" width="1" height="1"/><rect x="622" y="393" width="1" height="1"/><rect x="203" y="403" width="1" height="1"/><rect x="412" y="403" width="1" height="1"/><rect x="622" y="403" width="1" height="1"/><rect x="203" y="409" width="1" height="1"/><rect x="412" y="409" width="1" height="1"/><rect x="622" y="409" width="1" height="1"/><rect x="202" y="289" width="1" height="1"/><rect x="413" y="289" width="1" height="1"/><rect x="621" y="289" width="1" height="1"/><rect x="203" y="347" width="1" height="1"/><rect x="412" y="347" width="1" height="1"/><rect x="622" y="347" width="1" height="1"/><rect x="202" y="302" width="1" height="1"/><rect x="413" y="302" width="1" height="1"/><rect x="621" y="302" width="1" height="1"/><rect x="202" y="318" width="2" height="1"/><rect x="412" y="318" width="1" height="1"/><rect x="622" y="318" width="1" height="1"/><rect x="203" y="360" width="1" height="1"/><rect x="412" y="360" width="1" height="1"/><rect x="622" y="360" width="1" height="1"/><rect x="203" y="376" width="1" height="1"/><rect x="412" y="376" width="1" height="1"/><rect x="622" y="376" width="1" height="1"/><rect x="202" y="256" width="1" height="1"/><rect x="413" y="256" width="1" height="1"/><rect x="621" y="256" width="1" height="1"/><rect x="202" y="269" width="1" height="1"/><rect x="413" y="269" width="1" height="1"/><rect x="621" y="269" width="1" height="1"/><rect x="203" y="327" width="1" height="1"/><rect x="412" y="327" width="1" height="1"/><rect x="622" y="327" width="1" height="1"/><rect x="203" y="343" width="1" height="1"/><rect x="412" y="343" width="1" height="1"/><rect x="622" y="343" width="1" height="1"/><rect x="202" y="223" width="1" height="1"/><rect x="413" y="223" width="1" height="1"/><rect x="621" y="223" width="1" height="1"/><rect x="202" y="236" width="1" height="1"/><rect x="413" y="236" width="1" height="1"/><rect x="621" y="236" width="1" height="1"/><rect x="203" y="415" width="1" height="1"/><rect x="412" y="415" width="1" height="1"/><rect x="622" y="415" width="1" height="1"/><rect x="202" y="190" width="1" height="1"/><rect x="413" y="190" width="1" height="1"/><rect x="621" y="190" width="1" height="1"/><rect x="202" y="317" width="1" height="1"/><rect x="412" y="317" width="1" height="1"/><rect x="622" y="317" width="1" height="1"/><rect x="202" y="311" width="1" height="1"/><rect x="412" y="311" width="2" height="1"/><rect x="621" y="311" width="1" height="1"/><rect x="203" y="428" width="1" height="1"/><rect x="412" y="428" width="1" height="1"/><rect x="622" y="428" width="1" height="1"/><rect x="202" y="203" width="1" height="1"/><rect x="413" y="203" width="1" height="1"/><rect x="621" y="203" width="1" height="1"/><rect x="202" y="219" width="1" height="1"/><rect x="413" y="219" width="1" height="1"/><rect x="621" y="219" width="1" height="1"/><rect x="203" y="382" width="1" height="1"/><rect x="412" y="382" width="1" height="1"/><rect x="622" y="382" width="1" height="1"/><rect x="202" y="278" width="1" height="1"/><rect x="413" y="278" width="1" height="1"/><rect x="621" y="278" width="1" height="1"/><rect x="203" y="395" width="1" height="1"/><rect x="412" y="395" width="1" height="1"/><rect x="622" y="395" width="1" height="1"/><rect x="203" y="405" width="1" height="1"/><rect x="412" y="405" width="1" height="1"/><rect x="622" y="405" width="1" height="1"/><rect x="202" y="186" width="1" height="1"/><rect x="413" y="186" width="1" height="1"/><rect x="621" y="186" width="1" height="1"/><rect x="202" y="291" width="1" height="1"/><rect x="413" y="291" width="1" height="1"/><rect x="621" y="291" width="1" height="1"/><rect x="202" y="307" width="1" height="1"/><rect x="413" y="307" width="1" height="1"/><rect x="621" y="307" width="1" height="1"/><rect x="203" y="349" width="1" height="1"/><rect x="412" y="349" width="1" height="1"/><rect x="622" y="349" width="1" height="1"/><rect x="203" y="362" width="1" height="1"/><rect x="412" y="362" width="1" height="1"/><rect x="622" y="362" width="1" height="1"/><rect x="203" y="372" width="1" height="1"/><rect x="412" y="372" width="1" height="1"/><rect x="622" y="372" width="1" height="1"/><rect x="202" y="258" width="1" height="1"/><rect x="413" y="258" width="1" height="1"/><rect x="621" y="258" width="1" height="1"/><rect x="202" y="274" width="1" height="1"/><rect x="413" y="274" width="1" height="1"/><rect x="621" y="274" width="1" height="1"/><rect x="202" y="271" width="1" height="1"/><rect x="413" y="271" width="1" height="1"/><rect x="621" y="271" width="1" height="1"/><rect x="203" y="437" width="1" height="1"/><rect x="412" y="437" width="1" height="1"/><rect x="622" y="437" width="1" height="1"/><rect x="203" y="329" width="1" height="1"/><rect x="412" y="329" width="1" height="1"/><rect x="622" y="329" width="1" height="1"/><rect x="203" y="339" width="1" height="1"/><rect x="412" y="339" width="1" height="1"/><rect x="622" y="339" width="1" height="1"/><rect x="203" y="345" width="1" height="1"/><rect x="412" y="345" width="1" height="1"/><rect x="622" y="345" width="1" height="1"/><rect x="202" y="225" width="1" height="1"/><rect x="413" y="225" width="1" height="1"/><rect x="621" y="225" width="1" height="1"/><rect x="202" y="241" width="1" height="1"/><rect x="413" y="241" width="1" height="1"/><rect x="621" y="241" width="1" height="1"/><rect x="202" y="238" width="1" height="1"/><rect x="413" y="238" width="1" height="1"/><rect x="621" y="238" width="1" height="1"/><rect x="203" y="404" width="1" height="1"/><rect x="412" y="404" width="1" height="1"/><rect x="622" y="404" width="1" height="1"/><rect x="203" y="417" width="1" height="1"/><rect x="412" y="417" width="1" height="1"/><rect x="622" y="417" width="1" height="1"/><rect x="202" y="192" width="1" height="1"/><rect x="413" y="192" width="1" height="1"/><rect x="621" y="192" width="1" height="1"/><rect x="202" y="205" width="1" height="1"/><rect x="413" y="205" width="1" height="1"/><rect x="621" y="205" width="1" height="1"/><rect x="203" y="384" width="1" height="1"/><rect x="412" y="384" width="1" height="1"/><rect x="622" y="384" width="1" height="1"/><rect x="202" y="280" width="1" height="1"/><rect x="413" y="280" width="1" height="1"/><rect x="621" y="280" width="1" height="1"/><rect x="203" y="397" width="1" height="1"/><rect x="412" y="397" width="1" height="1"/><rect x="622" y="397" width="1" height="1"/><rect x="202" y="293" width="1" height="1"/><rect x="413" y="293" width="1" height="1"/><rect x="621" y="293" width="1" height="1"/><rect x="203" y="351" width="1" height="1"/><rect x="412" y="351" width="1" height="1"/><rect x="622" y="351" width="1" height="1"/><rect x="413" y="178" width="3" height="1"/><rect x="202" y="247" width="1" height="1"/><rect x="413" y="247" width="1" height="1"/><rect x="621" y="247" width="1" height="1"/><rect x="203" y="364" width="1" height="1"/><rect x="412" y="364" width="1" height="1"/><rect x="622" y="364" width="1" height="1"/><rect x="202" y="260" width="1" height="1"/><rect x="413" y="260" width="1" height="1"/><rect x="621" y="260" width="1" height="1"/><rect x="203" y="439" width="1" height="1"/><rect x="412" y="439" width="1" height="1"/><rect x="622" y="439" width="1" height="1"/><rect x="202" y="214" width="1" height="1"/><rect x="413" y="214" width="1" height="1"/><rect x="621" y="214" width="1" height="1"/><rect x="203" y="331" width="1" height="1"/><rect x="412" y="331" width="1" height="1"/><rect x="622" y="331" width="1" height="1"/><rect x="202" y="227" width="1" height="1"/><rect x="413" y="227" width="1" height="1"/><rect x="621" y="227" width="1" height="1"/><rect x="203" y="406" width="1" height="1"/><rect x="412" y="406" width="1" height="1"/><rect x="622" y="406" width="1" height="1"/><rect x="202" y="308" width="1" height="1"/><rect x="412" y="308" width="2" height="1"/><rect x="621" y="308" width="1" height="1"/><rect x="203" y="419" width="1" height="1"/><rect x="412" y="419" width="1" height="1"/><rect x="622" y="419" width="1" height="1"/><rect x="202" y="194" width="1" height="1"/><rect x="413" y="194" width="1" height="1"/><rect x="621" y="194" width="1" height="1"/><rect x="203" y="373" width="1" height="1"/><rect x="412" y="373" width="1" height="1"/><rect x="622" y="373" width="1" height="1"/><rect x="203" y="386" width="1" height="1"/><rect x="412" y="386" width="1" height="1"/><rect x="622" y="386" width="1" height="1"/><rect x="413" y="177" width="3" height="1"/><rect x="202" y="282" width="1" height="1"/><rect x="413" y="282" width="1" height="1"/><rect x="621" y="282" width="1" height="1"/><rect x="203" y="340" width="1" height="1"/><rect x="412" y="340" width="1" height="1"/><rect x="622" y="340" width="1" height="1"/><rect x="202" y="295" width="1" height="1"/><rect x="413" y="295" width="1" height="1"/><rect x="621" y="295" width="1" height="1"/><rect x="203" y="353" width="1" height="1"/><rect x="412" y="353" width="1" height="1"/><rect x="622" y="353" width="1" height="1"/><rect x="202" y="249" width="1" height="1"/><rect x="413" y="249" width="1" height="1"/><rect x="621" y="249" width="1" height="1"/><rect x="202" y="262" width="1" height="1"/><rect x="413" y="262" width="1" height="1"/><rect x="621" y="262" width="1" height="1"/><rect x="203" y="320" width="1" height="1"/><rect x="412" y="320" width="1" height="1"/><rect x="622" y="320" width="1" height="1"/><rect x="203" y="441" width="1" height="1"/><rect x="412" y="441" width="1" height="1"/><rect x="622" y="441" width="1" height="1"/><rect x="202" y="216" width="1" height="1"/><rect x="413" y="216" width="1" height="1"/><rect x="621" y="216" width="1" height="1"/><rect x="202" y="229" width="1" height="1"/><rect x="413" y="229" width="1" height="1"/><rect x="621" y="229" width="1" height="1"/><rect x="203" y="408" width="1" height="1"/><rect x="412" y="408" width="1" height="1"/><rect x="622" y="408" width="1" height="1"/><rect x="202" y="304" width="1" height="1"/><rect x="413" y="304" width="1" height="1"/><rect x="621" y="304" width="1" height="1"/><rect x="202" y="310" width="1" height="1"/><rect x="412" y="310" width="2" height="1"/><rect x="621" y="310" width="1" height="1"/><rect x="203" y="421" width="1" height="1"/><rect x="412" y="421" width="1" height="1"/><rect x="622" y="421" width="1" height="1"/><rect x="202" y="196" width="1" height="1"/><rect x="413" y="196" width="1" height="1"/><rect x="621" y="196" width="1" height="1"/><rect x="203" y="375" width="1" height="1"/><rect x="412" y="375" width="1" height="1"/><rect x="622" y="375" width="1" height="1"/><rect x="203" y="388" width="1" height="1"/><rect x="412" y="388" width="1" height="1"/><rect x="622" y="388" width="1" height="1"/><rect x="413" y="179" width="4" height="1"/><rect x="202" y="284" width="1" height="1"/><rect x="413" y="284" width="1" height="1"/><rect x="621" y="284" width="1" height="1"/><rect x="203" y="342" width="1" height="1"/><rect x="412" y="342" width="1" height="1"/><rect x="622" y="342" width="1" height="1"/><rect x="203" y="355" width="1" height="1"/><rect x="412" y="355" width="1" height="1"/><rect x="622" y="355" width="1" height="1"/><rect x="202" y="251" width="1" height="1"/><rect x="413" y="251" width="1" height="1"/><rect x="621" y="251" width="1" height="1"/><rect x="202" y="264" width="1" height="1"/><rect x="413" y="264" width="1" height="1"/><rect x="621" y="264" width="1" height="1"/><rect x="203" y="430" width="1" height="1"/><rect x="412" y="430" width="1" height="1"/><rect x="622" y="430" width="1" height="1"/><rect x="202" y="218" width="1" height="1"/><rect x="413" y="218" width="1" height="1"/><rect x="621" y="218" width="1" height="1"/><rect x="202" y="231" width="1" height="1"/><rect x="413" y="231" width="1" height="1"/><rect x="621" y="231" width="1" height="1"/><rect x="202" y="306" width="1" height="1"/><rect x="413" y="306" width="1" height="1"/><rect x="621" y="306" width="1" height="1"/><rect x="202" y="198" width="1" height="1"/><rect x="413" y="198" width="1" height="1"/><rect x="621" y="198" width="1" height="1"/><rect x="202" y="273" width="1" height="1"/><rect x="413" y="273" width="1" height="1"/><rect x="621" y="273" width="1" height="1"/><rect x="202" y="286" width="1" height="1"/><rect x="413" y="286" width="1" height="1"/><rect x="621" y="286" width="1" height="1"/><rect x="203" y="344" width="1" height="1"/><rect x="412" y="344" width="1" height="1"/><rect x="622" y="344" width="1" height="1"/><rect x="202" y="240" width="1" height="1"/><rect x="413" y="240" width="1" height="1"/><rect x="621" y="240" width="1" height="1"/><rect x="202" y="253" width="1" height="1"/><rect x="413" y="253" width="1" height="1"/><rect x="621" y="253" width="1" height="1"/><rect x="203" y="432" width="1" height="1"/><rect x="412" y="432" width="1" height="1"/><rect x="622" y="432" width="1" height="1"/><rect x="202" y="207" width="1" height="1"/><rect x="413" y="207" width="1" height="1"/><rect x="621" y="207" width="1" height="1"/><rect x="202" y="220" width="1" height="1"/><rect x="413" y="220" width="1" height="1"/><rect x="621" y="220" width="1" height="1"/><rect x="203" y="399" width="1" height="1"/><rect x="412" y="399" width="1" height="1"/><rect x="622" y="399" width="1" height="1"/><rect x="202" y="187" width="1" height="1"/><rect x="413" y="187" width="1" height="1"/><rect x="621" y="187" width="1" height="1"/><rect x="202" y="200" width="1" height="1"/><rect x="413" y="200" width="1" height="1"/><rect x="621" y="200" width="1" height="1"/><rect x="203" y="366" width="1" height="1"/><rect x="412" y="366" width="1" height="1"/><rect x="622" y="366" width="1" height="1"/><rect x="202" y="275" width="1" height="1"/><rect x="413" y="275" width="1" height="1"/><rect x="621" y="275" width="1" height="1"/><rect x="203" y="333" width="1" height="1"/><rect x="412" y="333" width="1" height="1"/><rect x="622" y="333" width="1" height="1"/><rect x="202" y="288" width="1" height="1"/><rect x="413" y="288" width="1" height="1"/><rect x="621" y="288" width="1" height="1"/><rect x="202" y="242" width="1" height="1"/><rect x="413" y="242" width="1" height="1"/><rect x="621" y="242" width="1" height="1"/><rect x="202" y="255" width="1" height="1"/><rect x="413" y="255" width="1" height="1"/><rect x="621" y="255" width="1" height="1"/><rect x="203" y="434" width="1" height="1"/><rect x="412" y="434" width="1" height="1"/><rect x="622" y="434" width="1" height="1"/><rect x="202" y="209" width="1" height="1"/><rect x="413" y="209" width="1" height="1"/><rect x="621" y="209" width="1" height="1"/><rect x="202" y="222" width="1" height="1"/><rect x="413" y="222" width="1" height="1"/><rect x="621" y="222" width="1" height="1"/><rect x="203" y="401" width="1" height="1"/><rect x="412" y="401" width="1" height="1"/><rect x="622" y="401" width="1" height="1"/><rect x="202" y="297" width="1" height="1"/><rect x="413" y="297" width="1" height="1"/><rect x="621" y="297" width="1" height="1"/><rect x="202" y="189" width="1" height="1"/><rect x="413" y="189" width="1" height="1"/><rect x="621" y="189" width="1" height="1"/><rect x="203" y="368" width="1" height="1"/><rect x="412" y="368" width="1" height="1"/><rect x="622" y="368" width="1" height="1"/><rect x="202" y="299" width="1" height="1"/><rect x="413" y="299" width="1" height="1"/><rect x="621" y="299" width="1" height="1"/><rect x="202" y="266" width="1" height="1"/><rect x="413" y="266" width="1" height="1"/><rect x="621" y="266" width="1" height="1"/><rect x="202" y="233" width="1" height="1"/><rect x="413" y="233" width="1" height="1"/><rect x="621" y="233" width="1" height="1"/><rect x="202" y="268" width="1" height="1"/><rect x="413" y="268" width="1" height="1"/><rect x="621" y="268" width="1" height="1"/><rect x="202" y="235" width="1" height="1"/><rect x="413" y="235" width="1" height="1"/><rect x="621" y="235" width="1" height="1"/><rect x="202" y="202" width="1" height="1"/><rect x="413" y="202" width="1" height="1"/><rect x="621" y="202" width="1" height="1"/><rect x="413" y="176" width="1" height="1"/></g><rect x="14" y="318" width="800" height="1" fill="#ffffff"/><rect x="14" y="182" width="799" height="1" fill="#ff0000"/><rect x="14" y="448" width="799" height="1" fill="#ff0000"/><rect x="202" y="49" width="1" height="800" fill="#ff0000"/><rect x="621" y="49" width="1" height="3" fill="#ff0000"/><rect x="621" y="54" width="1" height="4" fill="#ff0000"/><rect x="621" y="60" width="1" height="4" fill="#ff0000"/><rect x="621" y="66" width="1" height="4" fill="#ff0000"/><rect x="621" y="72" width="1" height="4" fill="#ff0000"/><rect x="621" y="78" width="1" height="4" fill="#ff0000"/><rect x="621" y="84" width="1" height="4" fill="#ff0000"/><rect x="621" y="90" width="1" height="4" fill="#ff0000"/><rect x="621" y="96" width="1" height="4" fill="#ff0000"/><rect x="621" y="102" width="1" height="4" fill="#ff0000"/><rect x="621" y="108" width="1" height="4" fill="#ff0000"/><rect x="621" y="114" width="1" height="4" fill="#ff0000"/><rect x="621" y="120" width="1" height="4" fill="#ff0000"/><rect x="621" y="126" width="1" height="4" fill="#ff0000"/><rect x="621" y="132" width="1" height="4" fill="#ff0000"/><rect x="621" y="138" width="1" height="4" fill="#ff0000"/><rect x="621" y="144" width="1" height="4" fill="#ff0000"/><rect x="621" y="150" width="1" height="4" fill="#ff0000"/><rect x="621" y="156" width="1" height="4" fill="#ff0000"/><rect x="621" y="162" width="1" height="4" fill="#ff0000"/><rect x="621" y="168" width="1" height="4" fill="#ff0000"/><rect x="621" y="174" width="1" height="4" fill="#ff0000"/><rect x="621" y="180" width="1" height="4" fill="#ff0000"/><rect x="621" y="186" width="1" height="4" fill="#ff0000"/><rect x="621" y="192" width="1" height="4" fill="#ff0000"/><rect x="621" y="198" width="1" height="4" fill="#ff0000"/><rect x="621" y="204" width="1" height="4" fill="#ff0000"/><rect x="621" y="210" width="1" height="4" fill="#ff0000"/><rect x="621" y="216" width="1" height="4" fill="#ff0000"/><rect x="621" y="222" width="1" height="4" fill="#ff0000"/><rect x="621" y="228" width="1" height="4" fill="#ff0000"/><rect x="621" y="234" width="1" height="4" fill="#ff0000"/><rect x="621" y="240" width="1" height="4" fill="#ff0000"/><rect x="621" y="246" width="1" height="4" fill="#ff0000"/><rect x="621" y="252" width="1" height="4" fill="#ff0000"/><rect x="621" y="258" width="1" height="4" fill="#ff0000"/><rect x="621" y="264" width="1" height="4" fill="#ff0000"/><rect x="621" y="270" width="1" height="4" fill="#ff0000"/><rect x="621" y="276" width="1" height="4" fill="#ff0000"/><rect x="621" y="282" width="1" height="4" fill="#ff0000"/><rect x="621" y="288" width="1" height="4" fill="#ff0000"/><rect x="621" y="294" width="1" height="4" fill="#ff0000"/><rect x="621" y="300" width="1" height="4" fill="#ff0000"/><rect x="621" y="306" width="1" height="4" fill="#ff0000"/><rect x="621" y="312" width="1" height="4" fill="#ff0000"/><rect x="621" y="318" width="1" height="4" fill="#ff0000"/><rect x="621" y="324" width="1" height="4" fill="#ff0000"/><rect x="621" y="330" width="1" height="4" fill="#ff0000"/><rect x="621" y="336" width="1" height="4" fill="#ff0000"/><rect x="621" y="342" width="1" height="4" fill="#ff0000"/><rect x="621" y="348" width="1" height="4" fill="#ff0000"/><rect x="621" y="354" width="1" height="4" fill="#ff0000"/><rect x="621" y="360" width="1" height="4" fill="#ff0000"/><rect x="621" y="366" width="1" height="4" fill="#ff0000"/><rect x="621" y="372" width="1" height="4" fill="#ff0000"/><rect x="621" y="378" width="1" height="4" fill="#ff0000"/><rect x="621" y="384" width="1" height="4" fill="#ff0000"/><rect x="621" y="390" width="1" height="4" fill="#ff0000"/><rect x="621" y="396" width="1" height="4" fill="#ff0000"/><rect x="621" y="402" width="1" height="4" fill="#ff0000"/><rect x="621" y="408" width="1" height="4" fill="#ff0000"/><rect x="621" y="414" width="1" height="4" fill="#ff0000"/><rect x="621" y="420" width="1" height="4" fill="#ff0000"/><rect x="621" y="426" width="1" height="4" fill="#ff0000"/><rect x="621" y="432" width="1" height="4" fill="#ff0000"/><rect x="621" y="438" width="1" height="4" fill="#ff0000"/><rect x="621" y="444" width="1" height="4" fill="#ff0000"/><rect x="621" y="450" width="1" height="4" fill="#ff0000"/><rect x="621" y="456" width="1" height="4" fill="#ff0000"/><rect x="621" y="462" width="1" height="4" fill="#ff0000"/><rect x="621" y="468" width="1" height="4" fill="#ff0000"/><rect x="621" y="474" width="1" height="4" fill="#ff0000"/><rect x="621" y="480" width="1" height="4" fill="#ff0000"/><rect x="621" y="486" width="1" height="4" fill="#ff0000"/><rect x="621" y="492" width="1" height="4" fill="#ff0000"/><rect x="621" y="498" width="1" height="4" fill="#ff0000"/><rect x="621" y="504" width="1" height="4" fill="#ff0000"/><rect x="621" y="510" width="1" height="4" fill="#ff0000"/><rect x="621" y="516" width="1" height="4" fill="#ff0000"/><rect x="621" y="522" width="1" height="4" fill="#ff0000"/><rect x="621" y="528" width="1" height="4" fill="#ff0000"/><rect x="621" y="534" width="1" height="4" fill="#ff0000"/><rect x="621" y="540" width="1" height="4" fill="#ff0000"/><rect x="621" y="546" width="1" height="4" fill="#ff0000"/><rect x="621" y="552" width="1" height="4" fill="#ff0000"/><rect x="621" y="558" width="1" height="4" fill="#ff0000"/><rect x="621" y="564" width="1" height="4" fill="#ff0000"/><rect x="621" y="570" width="1" height="4" fill="#ff0000"/><rect x="621" y="576" width="1" height="4" fill="#ff0000"/><rect x="621" y="582" width="1" height="4" fill="#ff0000"/><rect x="621" y="588" width="1" height="4" fill="#ff0000"/><rect x="621" y="594" width="1" height="4" fill="#ff0000"/><rect x="621" y="600" width="1" height="4" fill="#ff0000"/><rect x="621" y="606" width="1" height="4" fill="#ff0000"/><rect x="621" y="612" width="1" height="4" fill="#ff0000"/><rect x="621" y="618" width="1" height="4" fill="#ff0000"/><rect x="621" y="624" width="1" height="4" fill="#ff0000"/><rect x="621" y="630" width="1" height="4" fill="#ff0000"/><rect x="621" y="636" width="1" height="4" fill="#ff0000"/><rect x="621" y="642" width="1" height="4" fill="#ff0000"/><rect x="621" y="648" width="1" height="4" fill="#ff0000"/><rect x="621" y="654" width="1" height="4" fill="#ff0000"/><rect x="621" y="660" width="1" height="4" fill="#ff0000"/><rect x="621" y="666" width="1" height="4" fill="#ff0000"/><rect x="621" y="672" width="1" height="4" fill="#ff0000"/><rect x="621" y="678" width="1" height="4" fill="#ff0000"/><rect x="621" y="684" width="1" height="4" fill="#ff0000"/><rect x="621" y="690" width="1" height="4" fill="#ff0000"/><rect x="621" y="696" width="1" height="4" fill="#ff0000"/><rect x="621" y="702" width="1" height="4" fill="#ff0000"/><rect x="621" y="708" width="1" height="4" fill="#ff0000"/><rect x="621" y="714" width="1" height="4" fill="#ff0000"/><rect x="621" y="720" width="1" height="4" fill="#ff0000"/><rect x="621" y="726" width="1" height="4" fill="#ff0000"/><rect x="621" y="732" width="1" height="4" fill="#ff0000"/><rect x="621" y="738" width="1" height="4" fill="#ff0000"/><rect x="621" y="744" width="1" height="4" fill="#ff0000"/><rect x="621" y="750" width="1" height="4" fill="#ff0000"/><rect x="621" y="756" width="1" height="4" fill="#ff0000"/><rect x="621" y="762" width="1" height="4" fill="#ff0000"/><rect x="621" y="768" width="1" height="4" fill="#ff0000"/><rect x="621" y="774" width="1" height="4" fill="#ff0000"/><rect x="621" y="780" width="1" height="4" fill="#ff0000"/><rect x="621" y="786" width="1" height="4" fill="#ff0000"/><rect x="621" y="792" width="1" height="4" fill="#ff0000"/><rect x="621" y="798" width="1" height="4" fill="#ff0000"/><rect x="621" y="804" width="1" height="4" fill="#ff0000"/><rect x="621" y="810" width="1" height="4" fill="#ff0000"/><rect x="621" y="816" width="1" height="4" fill="#ff0000"/><rect x="621" y="822" width="1" height="4" fill="#ff0000"/><rect x="621" y="828" width="1" height="4" fill="#ff0000"/><rect x="621" y="834" width="1" height="4" fill="#ff0000"/><rect x="621" y="840" width="1" height="4" fill="#ff0000"/><rect x="621" y="846" width="1" height="3" fill="#ff0000"/></svg>
<div class="box" style="left:821px;top:48px;width:119px;height:28px"></div>
<div class="box" style="left:821px;top:74px;width:119px;height:162px"></div>
<div class="box" style="left:821px;top:234px;width:119px;height:160px"></div>
<div class="t" style="top:54px;letter-spacing:0.25px">TRIGGERED</div><div class="t" style="top:82px;">1 V/div</div><div class="t" style="top:104px;">200.0u s/div</div><div class="t" style="top:126px;">6.944444MS/s</div><div class="t" style="top:148px;">trigger: /</div><div class="t" style="top:170px;">probe: 1X</div><div class="t" style="top:192px;">average: 1.658 V</div><div class="t" style="top:214px;">rms: 2.354 Vrms</div><div class="t" style="top:242px;">h1: 3.33V</div><div class="t" style="top:264px;">h2: 0.0V</div><div class="t" style="top:286px;">hdelta: 3.33V</div><div class="t" style="top:308px;">v1: -527.0us</div><div class="t" style="top:330px;">v2: 520.0us</div><div class="t" style="top:352px;">vdelta: -1.05ms</div><div class="t" style="top:374px;letter-spacing:0.08px">1/vdelta: 955.0Hz</div>
<div class="box" style="left:14px;top:856px;width:800px;height:25px"></div>
<div style="position:absolute;left:19px;top:861px;width:6px;height:15px;background:#fff"></div>
</body></html>
